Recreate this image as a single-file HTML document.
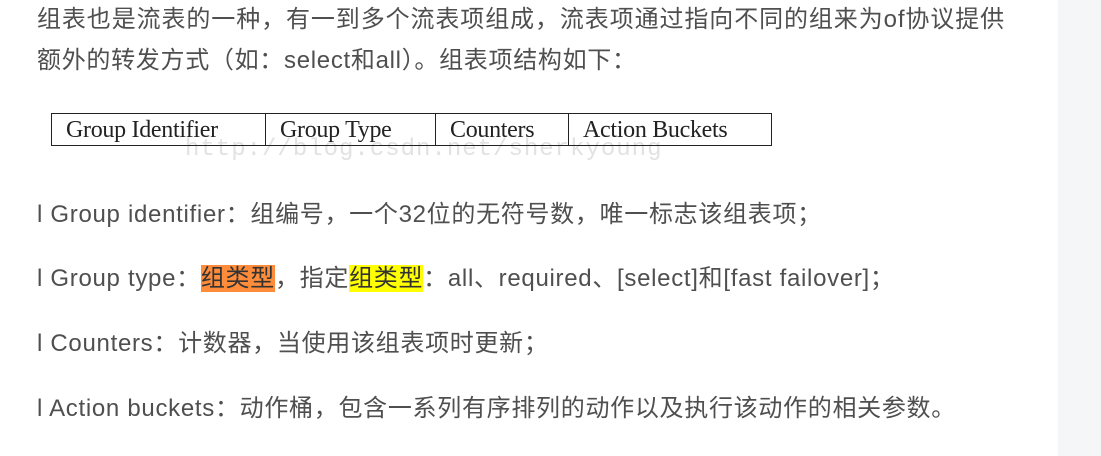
<!DOCTYPE html>
<html><head><meta charset="utf-8"><style>
body{margin:0;width:1101px;height:456px;background:#fff;position:relative;overflow:hidden;font-family:"Liberation Sans","Noto Sans CJK SC",sans-serif;color:#4f4f4f;font-size:24px;letter-spacing:0.7px;}
.side{position:absolute;left:1058px;top:0;width:43px;height:456px;background:#f5f6f7;}
.p{position:absolute;left:37px;white-space:nowrap;line-height:30px;}
table{position:absolute;left:51px;top:113px;border-collapse:collapse;font-family:"Liberation Serif",serif;font-size:24px;color:#222;letter-spacing:-0.3px;}
td{border:1.5px solid #222;padding:0 0 0 14px;height:31px;line-height:28px;}
.wm{position:absolute;left:185px;top:136px;font-family:"Liberation Mono",monospace;font-size:24px;color:#e2e2e2;letter-spacing:1px;}
.o{background:#ff8c3a;color:#333}.y{background:#ffff00;color:#333}
</style></head><body>
<div class="side"></div>
<div class="p" style="top:5px;letter-spacing:0.9px">组表也是流表的一种，有一到多个流表项组成，流表项通过指向不同的组来为of协议提供</div>
<div class="p" style="top:46px">额外的转发方式（如：select和all）。组表项结构如下：</div>
<div class="wm">http://blog.csdn.net/sherkyoung</div>
<table><tr><td style="width:199px">Group Identifier</td><td style="width:155px">Group Type</td><td style="width:118px">Counters</td><td style="width:188px">Action Buckets</td></tr></table>
<div class="p" style="top:200px">l Group identifier：组编号，一个32位的无符号数，唯一标志该组表项；</div>
<div class="p" style="top:264px">l Group type：<span class="o">组类型</span>，指定<span class="y">组类型</span>：all、required、[select]和[fast failover]；</div>
<div class="p" style="top:329px">l Counters：计数器，当使用该组表项时更新；</div>
<div class="p" style="top:394px">l Action buckets：动作桶，包含一系列有序排列的动作以及执行该动作的相关参数。</div>
</body></html>
